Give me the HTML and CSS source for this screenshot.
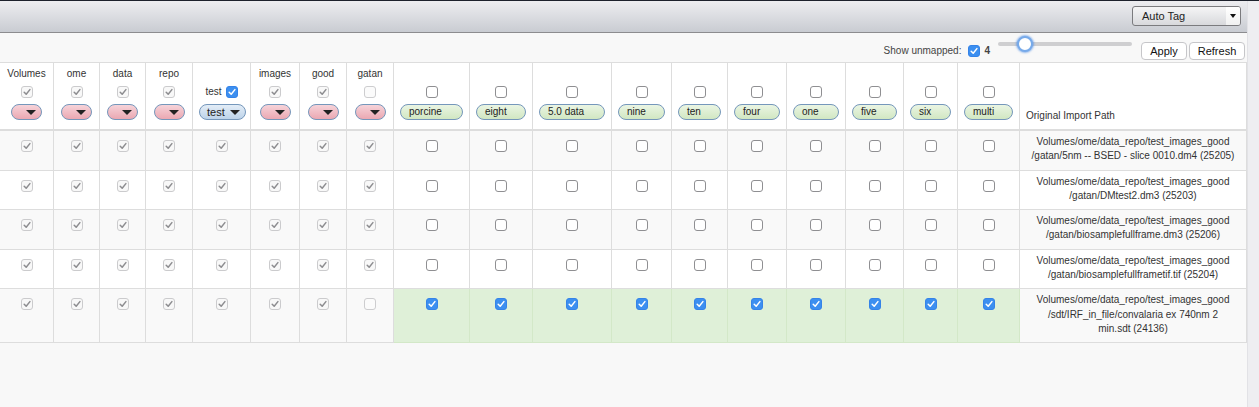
FILE: index.html
```html
<!DOCTYPE html>
<html>
<head>
<meta charset="utf-8">
<title>Auto Tag</title>
<link rel="stylesheet" href="styles.css">
</head>
<body>
<div class="topline"></div>
<div class="frame">
  <div class="main">
    <div class="topbar">
      <div class="select">
        <span class="select-text">Auto Tag</span>
        <span class="select-btn"><span class="tri"></span></span>
      </div>
    </div>
    <div class="toolbar">
      <span class="unmapped-label">Show unmapped:</span>
      <span class="cb cb-on tb-cb"><svg viewBox="0 0 10 10"><path d="M2.2 5.2l2 2.1 3.7-4.7"/></svg></span>
      <span class="count">4</span>
      <div class="slider"><div class="track"></div><div class="thumb"></div></div>
      <button class="btn btn-apply">Apply</button>
      <button class="btn btn-refresh">Refresh</button>
    </div>
    <table class="grid">
      <colgroup>
        <col class="w54"><col class="w46"><col class="w46"><col class="w47"><col class="w58"><col class="w49"><col class="w47"><col class="w47">
        <col class="w76"><col class="w63"><col class="w79"><col class="w60"><col class="w56"><col class="w59"><col class="w59"><col class="w58"><col class="w54"><col class="w62">
        <col class="w227">
      </colgroup>
      <thead>
        <tr>
          <th><div class="hl">Volumes</div><span class="cb cb-dis-on"><svg viewBox="0 0 10 10"><path d="M2.2 5.2l2 2.1 3.7-4.7"/></svg></span><span class="pill pink"><span class="caret"></span></span></th>
          <th><div class="hl">ome</div><span class="cb cb-dis-on"><svg viewBox="0 0 10 10"><path d="M2.2 5.2l2 2.1 3.7-4.7"/></svg></span><span class="pill pink"><span class="caret"></span></span></th>
          <th><div class="hl">data</div><span class="cb cb-dis-on"><svg viewBox="0 0 10 10"><path d="M2.2 5.2l2 2.1 3.7-4.7"/></svg></span><span class="pill pink"><span class="caret"></span></span></th>
          <th><div class="hl">repo</div><span class="cb cb-dis-on"><svg viewBox="0 0 10 10"><path d="M2.2 5.2l2 2.1 3.7-4.7"/></svg></span><span class="pill pink"><span class="caret"></span></span></th>
          <th><div class="hl-inline">test<span class="cb cb-on cb-inline"><svg viewBox="0 0 10 10"><path d="M2.2 5.2l2 2.1 3.7-4.7"/></svg></span></div><span class="pill blue">test<span class="caret"></span></span></th>
          <th><div class="hl">images</div><span class="cb cb-dis-on"><svg viewBox="0 0 10 10"><path d="M2.2 5.2l2 2.1 3.7-4.7"/></svg></span><span class="pill pink"><span class="caret"></span></span></th>
          <th><div class="hl">good</div><span class="cb cb-dis-on"><svg viewBox="0 0 10 10"><path d="M2.2 5.2l2 2.1 3.7-4.7"/></svg></span><span class="pill pink"><span class="caret"></span></span></th>
          <th><div class="hl">gatan</div><span class="cb cb-dis-off"></span><span class="pill pink"><span class="caret"></span></span></th>
          <th><span class="cb cb-off"></span><span class="pill green">porcine</span></th>
          <th><span class="cb cb-off"></span><span class="pill green">eight</span></th>
          <th><span class="cb cb-off"></span><span class="pill green">5.0 data</span></th>
          <th><span class="cb cb-off"></span><span class="pill green">nine</span></th>
          <th><span class="cb cb-off"></span><span class="pill green">ten</span></th>
          <th><span class="cb cb-off"></span><span class="pill green">four</span></th>
          <th><span class="cb cb-off"></span><span class="pill green">one</span></th>
          <th><span class="cb cb-off"></span><span class="pill green">five</span></th>
          <th><span class="cb cb-off"></span><span class="pill green">six</span></th>
          <th><span class="cb cb-off"></span><span class="pill green">multi</span></th>
          <th class="hpath">Original Import Path</th>
        </tr>
      </thead>
      <tbody>
        <tr class="odd">
          <td><span class="cb cb-dis-on"><svg viewBox="0 0 10 10"><path d="M2.2 5.2l2 2.1 3.7-4.7"/></svg></span></td>
          <td><span class="cb cb-dis-on"><svg viewBox="0 0 10 10"><path d="M2.2 5.2l2 2.1 3.7-4.7"/></svg></span></td>
          <td><span class="cb cb-dis-on"><svg viewBox="0 0 10 10"><path d="M2.2 5.2l2 2.1 3.7-4.7"/></svg></span></td>
          <td><span class="cb cb-dis-on"><svg viewBox="0 0 10 10"><path d="M2.2 5.2l2 2.1 3.7-4.7"/></svg></span></td>
          <td><span class="cb cb-dis-on"><svg viewBox="0 0 10 10"><path d="M2.2 5.2l2 2.1 3.7-4.7"/></svg></span></td>
          <td><span class="cb cb-dis-on"><svg viewBox="0 0 10 10"><path d="M2.2 5.2l2 2.1 3.7-4.7"/></svg></span></td>
          <td><span class="cb cb-dis-on"><svg viewBox="0 0 10 10"><path d="M2.2 5.2l2 2.1 3.7-4.7"/></svg></span></td>
          <td><span class="cb cb-dis-on"><svg viewBox="0 0 10 10"><path d="M2.2 5.2l2 2.1 3.7-4.7"/></svg></span></td>
          <td><span class="cb cb-off"></span></td><td><span class="cb cb-off"></span></td><td><span class="cb cb-off"></span></td><td><span class="cb cb-off"></span></td><td><span class="cb cb-off"></span></td>
          <td><span class="cb cb-off"></span></td><td><span class="cb cb-off"></span></td><td><span class="cb cb-off"></span></td><td><span class="cb cb-off"></span></td><td><span class="cb cb-off"></span></td>
          <td class="path">Volumes/ome/data_repo/test_images_good<br>/gatan/5nm -- BSED - slice 0010.dm4 (25205)</td>
        </tr>
        <tr>
          <td><span class="cb cb-dis-on"><svg viewBox="0 0 10 10"><path d="M2.2 5.2l2 2.1 3.7-4.7"/></svg></span></td>
          <td><span class="cb cb-dis-on"><svg viewBox="0 0 10 10"><path d="M2.2 5.2l2 2.1 3.7-4.7"/></svg></span></td>
          <td><span class="cb cb-dis-on"><svg viewBox="0 0 10 10"><path d="M2.2 5.2l2 2.1 3.7-4.7"/></svg></span></td>
          <td><span class="cb cb-dis-on"><svg viewBox="0 0 10 10"><path d="M2.2 5.2l2 2.1 3.7-4.7"/></svg></span></td>
          <td><span class="cb cb-dis-on"><svg viewBox="0 0 10 10"><path d="M2.2 5.2l2 2.1 3.7-4.7"/></svg></span></td>
          <td><span class="cb cb-dis-on"><svg viewBox="0 0 10 10"><path d="M2.2 5.2l2 2.1 3.7-4.7"/></svg></span></td>
          <td><span class="cb cb-dis-on"><svg viewBox="0 0 10 10"><path d="M2.2 5.2l2 2.1 3.7-4.7"/></svg></span></td>
          <td><span class="cb cb-dis-on"><svg viewBox="0 0 10 10"><path d="M2.2 5.2l2 2.1 3.7-4.7"/></svg></span></td>
          <td><span class="cb cb-off"></span></td><td><span class="cb cb-off"></span></td><td><span class="cb cb-off"></span></td><td><span class="cb cb-off"></span></td><td><span class="cb cb-off"></span></td>
          <td><span class="cb cb-off"></span></td><td><span class="cb cb-off"></span></td><td><span class="cb cb-off"></span></td><td><span class="cb cb-off"></span></td><td><span class="cb cb-off"></span></td>
          <td class="path">Volumes/ome/data_repo/test_images_good<br>/gatan/DMtest2.dm3 (25203)</td>
        </tr>
        <tr class="odd">
          <td><span class="cb cb-dis-on"><svg viewBox="0 0 10 10"><path d="M2.2 5.2l2 2.1 3.7-4.7"/></svg></span></td>
          <td><span class="cb cb-dis-on"><svg viewBox="0 0 10 10"><path d="M2.2 5.2l2 2.1 3.7-4.7"/></svg></span></td>
          <td><span class="cb cb-dis-on"><svg viewBox="0 0 10 10"><path d="M2.2 5.2l2 2.1 3.7-4.7"/></svg></span></td>
          <td><span class="cb cb-dis-on"><svg viewBox="0 0 10 10"><path d="M2.2 5.2l2 2.1 3.7-4.7"/></svg></span></td>
          <td><span class="cb cb-dis-on"><svg viewBox="0 0 10 10"><path d="M2.2 5.2l2 2.1 3.7-4.7"/></svg></span></td>
          <td><span class="cb cb-dis-on"><svg viewBox="0 0 10 10"><path d="M2.2 5.2l2 2.1 3.7-4.7"/></svg></span></td>
          <td><span class="cb cb-dis-on"><svg viewBox="0 0 10 10"><path d="M2.2 5.2l2 2.1 3.7-4.7"/></svg></span></td>
          <td><span class="cb cb-dis-on"><svg viewBox="0 0 10 10"><path d="M2.2 5.2l2 2.1 3.7-4.7"/></svg></span></td>
          <td><span class="cb cb-off"></span></td><td><span class="cb cb-off"></span></td><td><span class="cb cb-off"></span></td><td><span class="cb cb-off"></span></td><td><span class="cb cb-off"></span></td>
          <td><span class="cb cb-off"></span></td><td><span class="cb cb-off"></span></td><td><span class="cb cb-off"></span></td><td><span class="cb cb-off"></span></td><td><span class="cb cb-off"></span></td>
          <td class="path">Volumes/ome/data_repo/test_images_good<br>/gatan/biosamplefullframe.dm3 (25206)</td>
        </tr>
        <tr>
          <td><span class="cb cb-dis-on"><svg viewBox="0 0 10 10"><path d="M2.2 5.2l2 2.1 3.7-4.7"/></svg></span></td>
          <td><span class="cb cb-dis-on"><svg viewBox="0 0 10 10"><path d="M2.2 5.2l2 2.1 3.7-4.7"/></svg></span></td>
          <td><span class="cb cb-dis-on"><svg viewBox="0 0 10 10"><path d="M2.2 5.2l2 2.1 3.7-4.7"/></svg></span></td>
          <td><span class="cb cb-dis-on"><svg viewBox="0 0 10 10"><path d="M2.2 5.2l2 2.1 3.7-4.7"/></svg></span></td>
          <td><span class="cb cb-dis-on"><svg viewBox="0 0 10 10"><path d="M2.2 5.2l2 2.1 3.7-4.7"/></svg></span></td>
          <td><span class="cb cb-dis-on"><svg viewBox="0 0 10 10"><path d="M2.2 5.2l2 2.1 3.7-4.7"/></svg></span></td>
          <td><span class="cb cb-dis-on"><svg viewBox="0 0 10 10"><path d="M2.2 5.2l2 2.1 3.7-4.7"/></svg></span></td>
          <td><span class="cb cb-dis-on"><svg viewBox="0 0 10 10"><path d="M2.2 5.2l2 2.1 3.7-4.7"/></svg></span></td>
          <td><span class="cb cb-off"></span></td><td><span class="cb cb-off"></span></td><td><span class="cb cb-off"></span></td><td><span class="cb cb-off"></span></td><td><span class="cb cb-off"></span></td>
          <td><span class="cb cb-off"></span></td><td><span class="cb cb-off"></span></td><td><span class="cb cb-off"></span></td><td><span class="cb cb-off"></span></td><td><span class="cb cb-off"></span></td>
          <td class="path">Volumes/ome/data_repo/test_images_good<br>/gatan/biosamplefullframetif.tif (25204)</td>
        </tr>
        <tr class="odd">
          <td><span class="cb cb-dis-on"><svg viewBox="0 0 10 10"><path d="M2.2 5.2l2 2.1 3.7-4.7"/></svg></span></td>
          <td><span class="cb cb-dis-on"><svg viewBox="0 0 10 10"><path d="M2.2 5.2l2 2.1 3.7-4.7"/></svg></span></td>
          <td><span class="cb cb-dis-on"><svg viewBox="0 0 10 10"><path d="M2.2 5.2l2 2.1 3.7-4.7"/></svg></span></td>
          <td><span class="cb cb-dis-on"><svg viewBox="0 0 10 10"><path d="M2.2 5.2l2 2.1 3.7-4.7"/></svg></span></td>
          <td><span class="cb cb-dis-on"><svg viewBox="0 0 10 10"><path d="M2.2 5.2l2 2.1 3.7-4.7"/></svg></span></td>
          <td><span class="cb cb-dis-on"><svg viewBox="0 0 10 10"><path d="M2.2 5.2l2 2.1 3.7-4.7"/></svg></span></td>
          <td><span class="cb cb-dis-on"><svg viewBox="0 0 10 10"><path d="M2.2 5.2l2 2.1 3.7-4.7"/></svg></span></td>
          <td><span class="cb cb-dis-off"></span></td>
          <td class="ok"><span class="cb cb-on"><svg viewBox="0 0 10 10"><path d="M2.2 5.2l2 2.1 3.7-4.7"/></svg></span></td>
          <td class="ok"><span class="cb cb-on"><svg viewBox="0 0 10 10"><path d="M2.2 5.2l2 2.1 3.7-4.7"/></svg></span></td>
          <td class="ok"><span class="cb cb-on"><svg viewBox="0 0 10 10"><path d="M2.2 5.2l2 2.1 3.7-4.7"/></svg></span></td>
          <td class="ok"><span class="cb cb-on"><svg viewBox="0 0 10 10"><path d="M2.2 5.2l2 2.1 3.7-4.7"/></svg></span></td>
          <td class="ok"><span class="cb cb-on"><svg viewBox="0 0 10 10"><path d="M2.2 5.2l2 2.1 3.7-4.7"/></svg></span></td>
          <td class="ok"><span class="cb cb-on"><svg viewBox="0 0 10 10"><path d="M2.2 5.2l2 2.1 3.7-4.7"/></svg></span></td>
          <td class="ok"><span class="cb cb-on"><svg viewBox="0 0 10 10"><path d="M2.2 5.2l2 2.1 3.7-4.7"/></svg></span></td>
          <td class="ok"><span class="cb cb-on"><svg viewBox="0 0 10 10"><path d="M2.2 5.2l2 2.1 3.7-4.7"/></svg></span></td>
          <td class="ok"><span class="cb cb-on"><svg viewBox="0 0 10 10"><path d="M2.2 5.2l2 2.1 3.7-4.7"/></svg></span></td>
          <td class="ok"><span class="cb cb-on"><svg viewBox="0 0 10 10"><path d="M2.2 5.2l2 2.1 3.7-4.7"/></svg></span></td>
          <td class="path">Volumes/ome/data_repo/test_images_good<br>/sdt/IRF_in_file/convalaria ex 740nm 2<br>min.sdt (24136)</td>
        </tr>
      </tbody>
    </table>
  </div>
  <div class="rail"></div>
</div>
</body>
</html>
```

FILE: styles.css
```css
* { box-sizing: border-box; }

html, body {
  margin: 0;
  padding: 0;
  height: 100%;
}

body {
  background: #f8f8f8;
  font-family: "Liberation Sans", Arial, Helvetica, sans-serif;
  font-size: 10px;
  color: #333;
  overflow: hidden;
}

.topline {
  height: 1px;
  background: #1d212c;
}

.frame {
  display: flex;
  height: calc(100% - 1px);
}

.main {
  flex: 1;
  min-width: 0;
}

.rail {
  width: 12px;
  background: #eeeef1;
  border-left: 1px solid #e2e2e6;
}

/* top gradient bar */
.topbar {
  height: 32px;
  border-bottom: 1px solid #8c8c8f;
  background: linear-gradient(#ededf0, #c9ccd2);
  display: flex;
  justify-content: flex-end;
  align-items: flex-start;
  padding: 5px 6px 0 0;
}

.select {
  width: 109px;
  height: 20px;
  border: 1px solid #7b7b7e;
  border-radius: 3px;
  background: linear-gradient(#f5f5f6, #d8d9dc);
  display: flex;
  align-items: center;
  font-size: 11px;
  color: #222;
  padding-left: 9px;
}

.select-text {
  flex: 1;
}

.select-btn {
  width: 14px;
  height: 18px;
  background: linear-gradient(#ffffff, #f1f1f1);
  border-radius: 0 2px 2px 0;
  display: flex;
  align-items: center;
  justify-content: center;
}

.tri {
  width: 0;
  height: 0;
  border-left: 3px solid transparent;
  border-right: 3px solid transparent;
  border-top: 4px solid #111;
}

/* toolbar */
.toolbar {
  height: 29px;
  display: flex;
  justify-content: flex-end;
  align-items: flex-start;
  padding-right: 2px;
}

.unmapped-label {
  margin-top: 11px;
  line-height: 14px;
  color: #444;
  margin-right: 7px;
}

.tb-cb {
  margin: 12px 0 0 0 !important;
}

.count {
  margin: 11px 0 0 4px;
  line-height: 14px;
  font-weight: bold;
  color: #444;
}

.slider {
  position: relative;
  width: 134px;
  height: 16px;
  margin: 3px 0 0 8px;
}

.track {
  margin-top: 6px;
  height: 4px;
  border-radius: 2px;
  background: #cfcfd1;
}

.thumb {
  position: absolute;
  left: 19px;
  top: 0;
  width: 16px;
  height: 16px;
  border-radius: 50%;
  background: #fff;
  border: 2px solid #77aaea;
  box-shadow: 0 0 2px 1px rgba(60, 130, 225, 0.55);
}

.btn {
  margin-top: 9px;
  height: 18px;
  padding: 0;
  border: 1px solid #c6c6c9;
  border-radius: 4px;
  background: #fff;
  font-family: "Liberation Sans", Arial, Helvetica, sans-serif;
  font-size: 11px;
  color: #111;
}

.btn-apply {
  width: 46px;
  margin-left: 9px;
}

.btn-refresh {
  width: 56px;
  margin-left: 2px;
}

/* table */
.grid {
  table-layout: fixed;
  border-collapse: collapse;
  width: 1248px;
  margin-left: -1px;
}

.w54 { width: 54px; }
.w46 { width: 46px; }
.w47 { width: 47px; }
.w49 { width: 49px; }
.w54 { width: 54px; }
.w56 { width: 56px; }
.w58 { width: 58px; }
.w59 { width: 59px; }
.w60 { width: 60px; }
.w62 { width: 62px; }
.w63 { width: 63px; }
.w76 { width: 76px; }
.w79 { width: 79px; }
.w227 { width: 227px; }

.grid th {
  background: #fff;
  border: 1px solid #ddd;
  border-bottom: 2px solid #ddd;
  padding: 4px 6px 9px;
  vertical-align: bottom;
  text-align: center;
  font-weight: normal;
  line-height: 14px;
}

.grid th.hpath {
  text-align: left;
  padding-bottom: 6px;
}

.hl {
  line-height: 14px;
  white-space: nowrap;
}

.hl-inline {
  display: flex;
  justify-content: center;
  align-items: center;
  gap: 4px;
  height: 12px;
  margin-top: 5px;
}

.grid td {
  border: 1px solid #ddd;
  padding: 4px 6px 6px;
  vertical-align: top;
  text-align: center;
  background: #fff;
  line-height: 14.3px;
}

.grid tr.odd td {
  background: #f9f9f9;
}

.grid tr td.ok {
  background: #dff0d8;
  border-color: #d3e8c8;
}

.grid td.path {
  color: #333;
}

/* checkboxes */
.cb {
  display: block;
  width: 12px;
  height: 12px;
  border-radius: 3px;
  margin: 5px auto 0;
}

.cb svg {
  display: block;
  width: 10px;
  height: 10px;
  fill: none;
  stroke-width: 1.5;
  stroke-linecap: round;
  stroke-linejoin: round;
}

.cb-off {
  border: 1px solid #8f8f92;
  background: #fff;
}

.cb-dis-off {
  border: 1px solid #cdcdcf;
  background: #fbfbfb;
}

.cb-dis-on {
  border: 1px solid #cbcbcd;
  background: #f8f8f8;
}

.cb-dis-on svg {
  stroke: #8d8d90;
}

.cb-on {
  border: 1px solid #3583e8;
  background: #3c8ff0;
}

.cb-on svg {
  stroke: #fff;
}

.cb-inline {
  margin: 0;
}

/* pills */
.pill {
  height: 16px;
  border: 1px solid #7597bb;
  border-radius: 8px;
  margin: 6px auto 0;
}

.pink {
  display: flex;
  width: 31px;
  justify-content: flex-end;
  align-items: center;
  padding-right: 5px;
  background: linear-gradient(#f6d3d9, #eba8b2);
}

.blue {
  display: flex;
  width: max-content;
  align-items: center;
  gap: 5px;
  padding: 0 5px 0 7px;
  font-size: 11px;
  color: #222;
  background: linear-gradient(#e3edf7, #bdd3e9);
}

.green {
  display: block;
  width: 100%;
  text-align: left;
  padding-left: 8px;
  line-height: 14px;
  color: #222;
  white-space: nowrap;
  overflow: hidden;
  background: linear-gradient(#eaf5e3, #d1e7c2);
}

.caret {
  width: 0;
  height: 0;
  border-left: 5px solid transparent;
  border-right: 5px solid transparent;
  border-top: 5px solid #222;
}
```
